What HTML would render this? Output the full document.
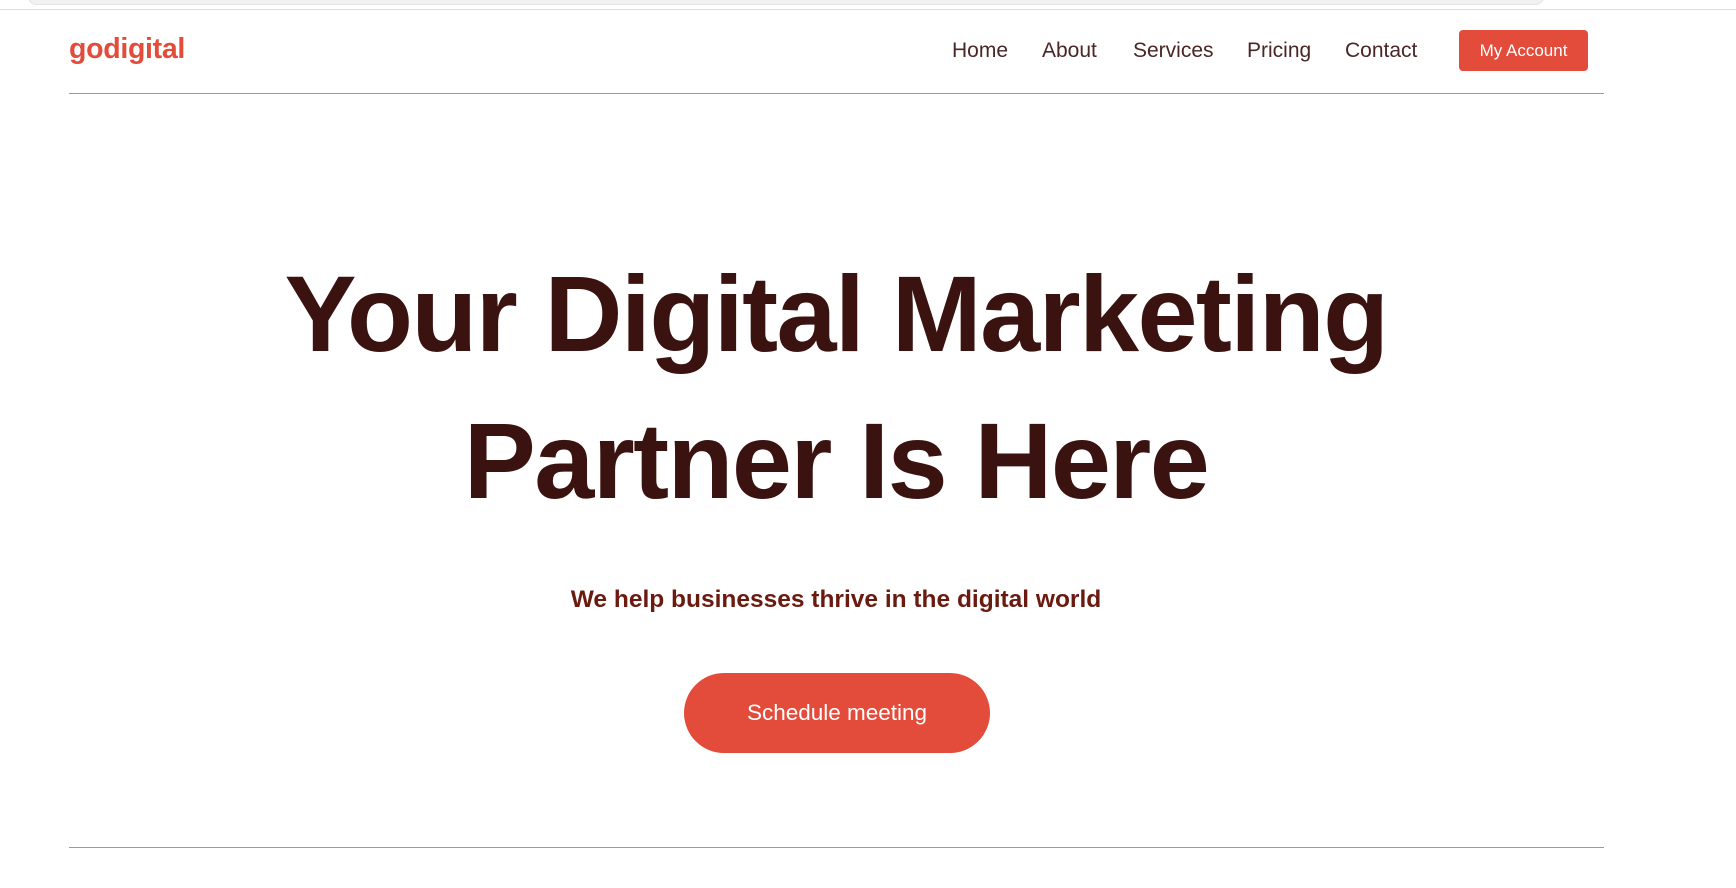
<!DOCTYPE html>
<html><head><meta charset="utf-8"><style>
*{margin:0;padding:0;box-sizing:border-box}
body{width:1736px;height:888px;background:#fff;position:relative;overflow:hidden;font-family:"Liberation Sans",Arial,sans-serif}
.abs{position:absolute;white-space:nowrap}
.topbar{left:28px;top:-12px;width:1516px;height:17px;background:#f1f2f4;border-radius:10px;border:1px solid #e4e4e4}
.topline{left:0;top:9px;width:1736px;height:1px;background:#dcdcdc}
.logo{left:69px;top:33px;font-size:28.5px;font-weight:bold;color:#e34b3a;letter-spacing:-0.3px;line-height:32px}
.nav{top:39px;font-size:21px;color:#4a2626;line-height:24px}
.btn1{left:1459px;top:30px;width:129px;height:41px;background:#e34b3a;border-radius:4px;color:#fff;font-size:17px;text-align:center;line-height:41px}
.hr{left:69px;width:1535px;height:1px;background:#9a9a9a}
h1{position:absolute;left:0;width:1672px;top:240px;text-align:center;font-size:108px;line-height:147px;font-weight:bold;color:#3a1210;letter-spacing:-1.6px}
.sub{left:0;width:1672px;text-align:center;top:585px;font-size:24.5px;line-height:30px;font-weight:bold;color:#6b1a10}
.btn2{left:684px;top:673px;width:306px;height:80px;border-radius:40px;background:#e34b3a;color:#fff;font-size:22.5px;text-align:center;line-height:80px}
</style></head><body>
<div class="abs topbar"></div>
<div class="abs topline"></div>
<div class="abs logo">godigital</div>
<div class="abs nav" style="left:952px">Home</div>
<div class="abs nav" style="left:1042px">About</div>
<div class="abs nav" style="left:1133px">Services</div>
<div class="abs nav" style="left:1247px">Pricing</div>
<div class="abs nav" style="left:1345px">Contact</div>
<div class="abs btn1">My Account</div>
<div class="abs hr" style="top:93px"></div>
<h1>Your Digital Marketing<br>Partner Is Here</h1>
<div class="abs sub">We help businesses thrive in the digital world</div>
<div class="abs btn2">Schedule meeting</div>
<div class="abs hr" style="top:847px"></div>
</body></html>
